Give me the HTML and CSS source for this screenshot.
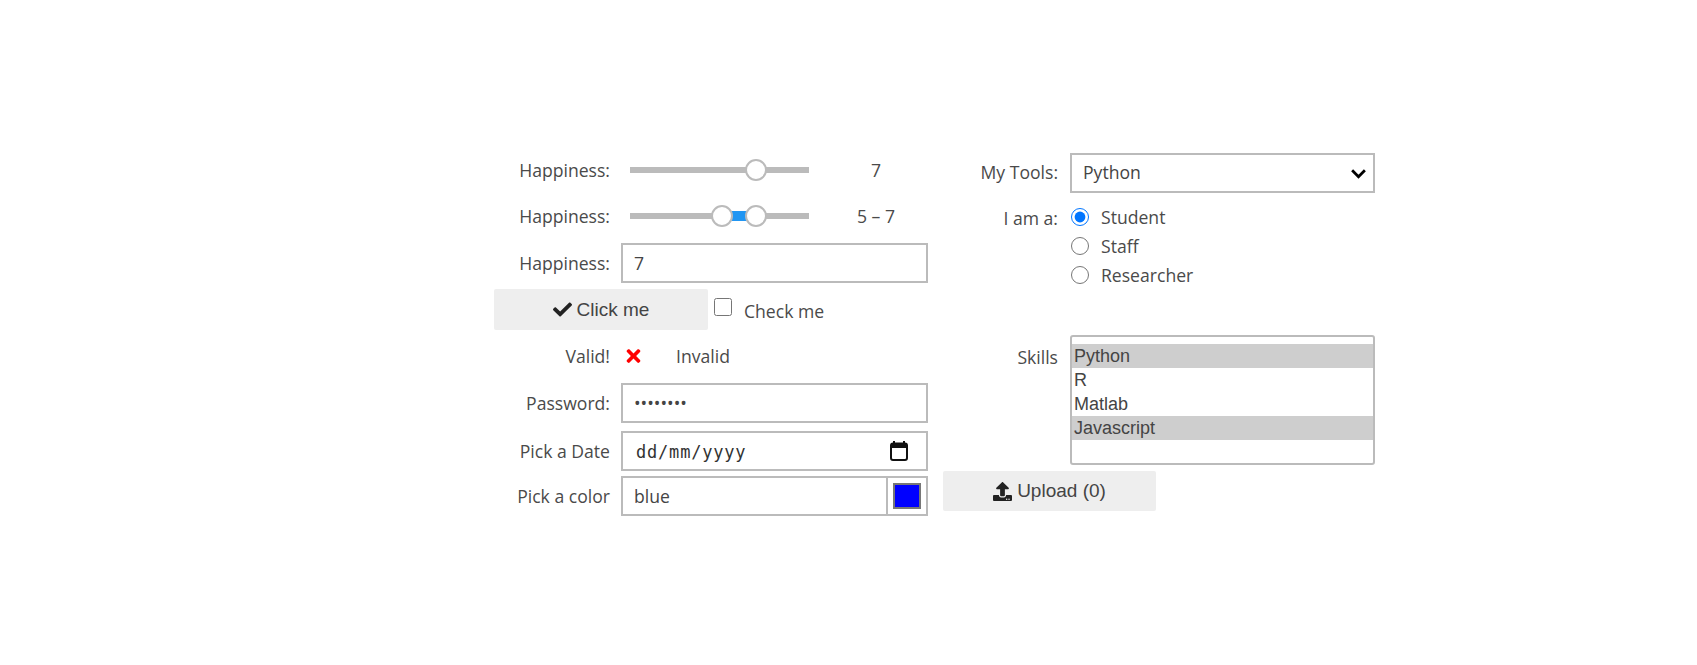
FILE: index.html
```html
<!DOCTYPE html>
<html lang="en">
<head>
  <meta charset="UTF-8" />
  <title>Widgets</title>
  <link rel="stylesheet" href="styles.css">
</head>
<body>
  <div class="panel">
    <div class="column">
      <div class="row row-slider">
        <label class="label">Happiness:</label>
        <div class="slider">
          <div class="thumb" style="left: 70.4%"></div>
        </div>
        <span class="value">7</span>
      </div>
      <div class="row row-slider">
        <label class="label">Happiness:</label>
        <div class="slider">
          <div class="slider-fill" style="left: 51.2%; width: 19.2%"></div>
          <div class="thumb" style="left: 51.2%"></div>
          <div class="thumb" style="left: 70.4%"></div>
        </div>
        <span class="value">5 – 7</span>
      </div>
      <div class="row gap-7">
        <label class="label">Happiness:</label>
        <input class="field" type="text" value="7">
      </div>
      <div class="row row-button">
        <button class="btn">
          <svg class="btn-icon" viewBox="0 0 512 512"><path d="M173.898 439.404l-166.4-166.4c-9.997-9.997-9.997-26.206 0-36.204l36.203-36.204c9.997-9.998 26.207-9.998 36.204 0L192 312.69 432.095 72.596c9.997-9.997 26.207-9.997 36.204 0l36.203 36.204c9.997 9.997 9.997 26.206 0 36.204l-294.4 294.401c-9.998 9.997-26.207 9.997-36.204-.001z"/></svg>
          Click me
        </button>
        <label class="check">
          <input type="checkbox">
          <span>Check me</span>
        </label>
      </div>
      <div class="row">
        <label class="label">Valid!</label>
        <svg class="cross" viewBox="0 0 352 512"><path d="M242.72 256l100.07-100.07c12.28-12.28 12.28-32.19 0-44.48l-22.24-22.24c-12.28-12.28-32.19-12.28-44.48 0L176 189.28 75.93 89.21c-12.28-12.28-32.19-12.28-44.48 0L9.21 111.45c-12.28 12.28-12.28 32.19 0 44.48L109.28 256 9.21 356.07c-12.28 12.28-12.28 32.19 0 44.48l22.24 22.24c12.28 12.28 32.2 12.28 44.48 0L176 322.72l100.07 100.07c12.28 12.28 32.2 12.28 44.48 0l22.24-22.24c12.28-12.28 12.28-32.19 0-44.48L242.72 256z"/></svg>
        <span class="invalid">Invalid</span>
      </div>
      <div class="row gap-7">
        <label class="label">Password:</label>
        <input class="field" type="password" value="password">
      </div>
      <div class="row gap-8">
        <label class="label">Pick a Date</label>
        <div class="field date">
          <span class="date-text">dd/mm/yyyy</span>
          <svg class="calendar" viewBox="0 0 18 20"><path d="M4 0v2M14 0v2" stroke="#111" stroke-width="2" fill="none"/><rect x="1" y="2.5" width="16" height="16.5" rx="2" fill="none" stroke="#111" stroke-width="2"/><rect x="1" y="2.5" width="16" height="4.5" fill="#111"/></svg>
        </div>
      </div>
      <div class="row gap-5">
        <label class="label">Pick a color</label>
        <div class="field color">
          <span class="color-text">blue</span>
          <span class="color-box"><span class="swatch"></span></span>
        </div>
      </div>
    </div>

    <div class="column column-right">
      <div class="row row-select">
        <label class="label">My Tools:</label>
        <select class="field select">
          <option>Python</option>
          <option>R</option>
          <option>Matlab</option>
        </select>
      </div>
      <div class="row row-radios">
        <label class="label">I am a:</label>
        <div class="radios">
          <label class="radio"><input type="radio" name="role" checked><span>Student</span></label>
          <label class="radio"><input type="radio" name="role"><span>Staff</span></label>
          <label class="radio"><input type="radio" name="role"><span>Researcher</span></label>
        </div>
      </div>
      <div class="row row-list">
        <label class="label">Skills</label>
        <div class="listbox">
          <div class="option selected">Python</div>
          <div class="option">R</div>
          <div class="option">Matlab</div>
          <div class="option selected">Javascript</div>
        </div>
      </div>
      <div class="row row-upload">
        <button class="btn">
          <svg class="btn-icon" viewBox="0 0 512 512"><path d="M296 384h-80c-13.3 0-24-10.7-24-24V192h-87.7c-17.8 0-26.7-21.5-14.1-34.1L242.3 5.7c7.5-7.5 19.8-7.5 27.3 0l152.2 152.2c12.6 12.6 3.7 34.1-14.1 34.1H320v168c0 13.3-10.7 24-24 24zm216-8v112c0 13.3-10.7 24-24 24H24c-13.3 0-24-10.7-24-24V376c0-13.3 10.7-24 24-24h136v8c0 30.9 25.1 56 56 56h80c30.9 0 56-25.1 56-56v-8h136c13.3 0 24 10.7 24 24zm-124 88c0-11-9-20-20-20s-20 9-20 20 9 20 20 20 20-9 20-20zm64 0c0-11-9-20-20-20s-20 9-20 20 9 20 20 20 20-9 20-20z"/></svg>
          Upload (0)
        </button>
      </div>
    </div>
  </div>
</body>
</html>
```

FILE: styles.css
```css
* { margin: 0; padding: 0; box-sizing: border-box; }
body {
  background-color: #fff;
  font-family: "Open Sans", "Noto Sans", sans-serif;
  font-size: 17.6px;
  color: #4a4a4a;
  overflow: hidden;
}
.panel {
  display: flex;
  gap: 15px;
  padding: 150px 0 0 494px;
}
.column {
  width: 434px;
  display: flex;
  flex-direction: column;
  gap: 6px;
}
.column-right { width: 432px; gap: 0; }

.row {
  display: flex;
  align-items: center;
  height: 40px;
  gap: 11px;
}
.column-right .row { gap: 12px; }
.gap-7 { margin-top: 1px; }
.gap-8 { margin-top: 2px; }
.gap-5 { margin-top: -1px; }
.label {
  width: 116px;
  flex-shrink: 0;
  text-align: right;
}
.column-right .label { width: 115px; }

.field {
  width: 307px;
  height: 40px;
  border: 2px solid #bbb;
  background-color: #fff;
  padding: 0 11px;
  font-family: "Open Sans", sans-serif;
  font-size: 17.6px;
  color: #444;
  outline: none;
}

/* sliders */
.row-slider { gap: 0; }
.slider {
  position: relative;
  width: 179px;
  height: 6px;
  margin-left: 20px;
  background-color: #bbb;
}
.slider-fill {
  position: absolute;
  top: -2px;
  height: 10px;
  background-color: #2196f3;
}
.thumb {
  position: absolute;
  top: -8px;
  width: 22px;
  height: 22px;
  margin-left: -11px;
  border-radius: 50%;
  border: 2px solid #bbb;
  background-color: #fff;
}
.value {
  width: 119px;
  padding-left: 15px;
  text-align: center;
}

/* buttons */
.btn {
  width: 214px;
  height: 41px;
  border: none;
  border-radius: 2px;
  background-color: #eee;
  font-family: "Liberation Sans", Arial, sans-serif;
  font-size: 19px;
  color: #444;
  display: flex;
  align-items: center;
  justify-content: center;
  gap: 5px;
}
.btn-icon { width: 19px; height: 19px; fill: #222; }
.row-button { height: 41px; }
.check {
  display: flex;
  align-items: center;
  gap: 12px;
  margin-left: -5px;
}
.check input { width: 18px; height: 18px; margin-top: -5px; }
.check span { margin-top: 2px; }

.cross { width: 15px; height: 20px; fill: #f00; margin-left: 5px; }
.invalid { margin-left: 24px; }

/* date and colour */
.date {
  display: flex;
  align-items: center;
  justify-content: space-between;
  padding-left: 13px;
  padding-right: 18px;
}
.date-text {
  font-family: "DejaVu Sans Mono", monospace;
  font-size: 17px;
  color: #333;
  letter-spacing: 0.8px;
  margin-top: 1px;
}
.calendar { width: 18px; height: 20px; }
.color { display: flex; align-items: center; padding-right: 0; }
.color-text { flex: 1; }
.color-box {
  display: flex;
  align-items: center;
  justify-content: center;
  width: 40px;
  height: 36px;
  border-left: 2px solid #bbb;
}
.swatch {
  width: 28px;
  height: 26px;
  background-color: #00f;
  border: 2px solid #777;
}

/* right column */
.row-select { margin-top: 3px; }
.row-select .label { margin-bottom: 2px; }
.select {
  width: 305px;
  appearance: none;
  -webkit-appearance: none;
  border-radius: 0;
  padding-bottom: 2px;
  background-image: url("data:image/svg+xml,%3Csvg xmlns='http://www.w3.org/2000/svg' viewBox='0 0 16 10'%3E%3Cpath d='M2 2l6 6 6-6' fill='none' stroke='%23000' stroke-width='2.6'/%3E%3C/svg%3E");
  background-repeat: no-repeat;
  background-position: right 6px center;
  background-size: 17px 11px;
}
.row-radios {
  height: auto;
  align-items: flex-start;
  margin-top: 10px;
}
.row-radios .label { margin-top: 3px; }
.radios { display: flex; flex-direction: column; }
.radio {
  display: flex;
  align-items: center;
  gap: 12px;
  height: 28.7px;
}
.radio input { width: 18px; height: 18px; margin-left: 1px; }
.row-list {
  height: 130px;
  align-items: flex-start;
  margin-top: 45.9px;
}
.row-list .label { margin-top: 10px; }
.listbox {
  width: 305px;
  height: 130px;
  border: 2px solid #bbb;
  border-radius: 3px;
  padding: 7px 0;
  font-family: "Liberation Sans", Arial, sans-serif;
  font-size: 18px;
  color: #444;
}
.option {
  height: 24px;
  line-height: 24px;
  padding-left: 2px;
}
.option.selected { background-color: #cecece; }
.row-upload { margin-top: 6px; }
.row-upload .btn { width: 213px; height: 40px; padding-top: 1px; }
```
